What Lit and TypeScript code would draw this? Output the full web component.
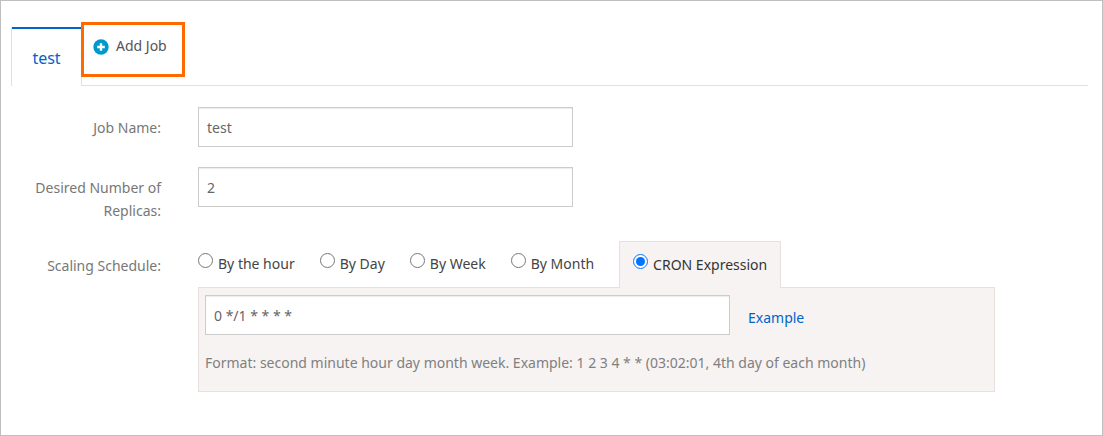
import { LitElement, html, css } from "lit";
import { customElement, state } from "lit/decorators.js";

interface ScheduleOption {
  value: string;
  label: string;
}

const SCHEDULES: ScheduleOption[] = [
  { value: "hour", label: "By the hour" },
  { value: "day", label: "By Day" },
  { value: "week", label: "By Week" },
  { value: "month", label: "By Month" },
];

@customElement("job-tabs")
export class JobTabs extends LitElement {
  static styles = css`
    :host {
      display: block;
    }
    .tabs {
      display: flex;
      align-items: flex-start;
      border-bottom: 1px solid #e1e1e1;
    }
    button {
      font: inherit;
      cursor: pointer;
      border-radius: 0;
    }
    .tab {
      box-sizing: border-box;
      min-width: 71px;
      height: 59px;
      margin: 5px 0 -1px;
      padding: 4px 8px 0;
      border: 0 solid #e1e1e1;
      border-width: 0 1px;
      background: #fff;
      box-shadow: inset 0 2px #0064c8;
      color: #0064c8;
      font-size: 16px;
    }
    .add {
      display: flex;
      align-items: flex-start;
      gap: 7px;
      box-sizing: border-box;
      height: 55px;
      margin-left: -1px;
      padding: 9px 15px 0 9px;
      border: 3px solid #ff6a00;
      background: #fff;
      color: #555;
      font-size: 14px;
      line-height: 23px;
    }
    .plus {
      width: 16px;
      height: 16px;
      margin-top: 5px;
    }
  `;

  render() {
    return html`
      <div class="tabs">
        <button class="tab" type="button">test</button>
        <button class="add" type="button">
          <svg class="plus" viewBox="0 0 16 16" aria-hidden="true">
            <circle cx="8" cy="8" r="7.7" fill="#0099cc" />
            <path d="M8 4.2v7.6M4.2 8h7.6" stroke="#fff" stroke-width="2.4" />
          </svg>
          Add Job
        </button>
      </div>
    `;
  }
}

@customElement("app-root")
export class AppRoot extends LitElement {
  static styles = css`
    :host {
      display: block;
      box-sizing: border-box;
      min-height: 100vh;
      padding: 21px 14px 32px 10px;
      border: 1px solid #bfbfbf;
      background: #fff;
      color: #444;
      font-family: "Noto Sans", "Open Sans", sans-serif;
      font-size: 14px;
      line-height: 23px;
    }
    .form {
      display: grid;
      grid-template-columns: 150px 1fr;
      column-gap: 37px;
      row-gap: 20px;
      padding-top: 21px;
    }
    .label {
      margin-bottom: -1px;
      padding-top: 9px;
      color: #777;
      text-align: right;
    }
    .text {
      display: block;
      box-sizing: border-box;
      width: 375px;
      max-width: 100%;
      height: 40px;
      padding: 0 8px;
      border: 1px solid #ccc;
      border-radius: 0;
      background: #fff;
      box-shadow: inset 0 1px 1px rgba(0, 0, 0, 0.075);
      color: #666;
      font: inherit;
    }
    .wide {
      width: 525px;
    }
    .schedule {
      min-width: 0;
    }
    .schedule-label {
      padding-top: 13px;
    }
    .options {
      display: flex;
      gap: 25px;
    }
    .option {
      display: flex;
      gap: 5px;
      padding-top: 11px;
    }
    .option input {
      flex: none;
      width: 15px;
      height: 15px;
      margin: 1px 0 0;
    }
    .cron {
      height: 47px;
      box-sizing: border-box;
      margin-bottom: -1px;
      padding: 11px 13px 0;
      border: 1px solid #e8dfdf;
      border-bottom: 0;
      background: #f7f3f2;
      color: #333;
      position: relative;
    }
    .panel {
      box-sizing: border-box;
      width: 797px;
      max-width: 100%;
      padding: 7px 6px 17px;
      border: 1px solid #e8dfdf;
      background: #f7f3f2;
    }
    .expression {
      display: flex;
      align-items: center;
      gap: 18px;
    }
    .link {
      padding-top: 4px;
      color: #0064c8;
      text-decoration: none;
    }
    .hint {
      margin: 16px 0 0;
      color: #808080;
    }
  `;

  @state() private schedule = "cron";

  private pick(value: string) {
    this.schedule = value;
  }

  private renderRadio(value: string, label: string, extra = "") {
    return html`
      <label class="option ${extra}">
        <input
          type="radio"
          name="schedule"
          .checked=${this.schedule === value}
          @change=${() => this.pick(value)}
        />
        <span class="caption">${label}</span>
      </label>
    `;
  }

  render() {
    return html`
      <job-tabs></job-tabs>
      <form class="form">
        <label class="label" for="name">Job Name:</label>
        <input class="text" id="name" type="text" value="test" />
        <label class="label" for="replicas">Desired Number of Replicas:</label>
        <input class="text" id="replicas" type="text" value="2" />
        <div class="label schedule-label" id="schedule">Scaling Schedule:</div>
        <div class="schedule" role="radiogroup" aria-labelledby="schedule">
          <div class="options">
            ${SCHEDULES.map((o) => this.renderRadio(o.value, o.label))}
            ${this.renderRadio("cron", "CRON Expression", "cron")}
          </div>
          <div class="panel">
            <div class="expression">
              <input class="text wide" type="text" value="0 */1 * * * *" aria-label="CRON Expression" />
              <a class="link" href="#example">Example</a>
            </div>
            <p class="hint">
              Format: second minute hour day month week. Example: 1 2 3 4 * * (03:02:01, 4th day of each month)
            </p>
          </div>
        </div>
      </form>
    `;
  }
}
